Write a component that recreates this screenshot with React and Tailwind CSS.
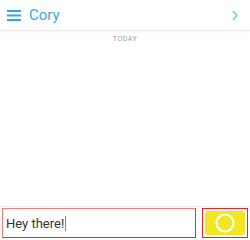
export default function App() {
  return (
    <div className="w-[250px] h-[240px] bg-white flex flex-col overflow-hidden" style={{ fontFamily: "Roboto, 'Liberation Sans', sans-serif" }}>
      <div className="h-[31px] flex items-center border-b border-[#ececec] shadow-[0_1px_2px_rgba(0,0,0,0.05)] pl-[7px] pr-[12px]">
        <svg width="14" height="11" viewBox="0 0 14 11" className="shrink-0">
          <rect x="0" y="0" width="14" height="2" fill="#2ea8e0" />
          <rect x="0" y="4.5" width="14" height="2" fill="#2ea8e0" />
          <rect x="0" y="9" width="14" height="2" fill="#2ea8e0" />
        </svg>
        <span className="ml-[8px] text-[15px] text-[#3aaae2] leading-none">Cory</span>
        <div className="flex-1" />
        <svg width="6" height="11" viewBox="0 0 6 11">
          <path d="M1 1 L5 5.5 L1 10" fill="none" stroke="#80cdf0" strokeWidth="1.8" />
        </svg>
      </div>
      <div className="flex justify-center pt-[5px]">
        <span className="text-[7px] tracking-[0.5px] text-[#999] leading-none">TODAY</span>
      </div>
      <div className="flex-1" />
      <div className="border-t border-[#eeeeee] h-[34px] flex items-start pt-[1px] pl-[2px] pr-[2px]">
        <div className="w-[194px] h-[30px] border border-[#ff7777] border-r-[#ff2020] border-b-[#ff2020] flex items-center pl-[3px]">
          <span className="text-[13px] text-[#333] leading-none">Hey there!</span>
          <span className="w-[1px] h-[15px] bg-[#2f9be8] ml-[0.5px]" />
        </div>
        <div className="ml-[6px] w-[46px] h-[30px] border border-[#ff1a1a] p-[2px] flex">
          <div className="flex-1 bg-[#f4e521] rounded-[3px] flex items-center justify-center">
            <svg width="20" height="20" viewBox="0 0 20 20">
              <circle cx="10" cy="10" r="8.5" fill="none" stroke="#ffffff" strokeWidth="2.2" />
            </svg>
          </div>
        </div>
      </div>
    </div>
  );
}
